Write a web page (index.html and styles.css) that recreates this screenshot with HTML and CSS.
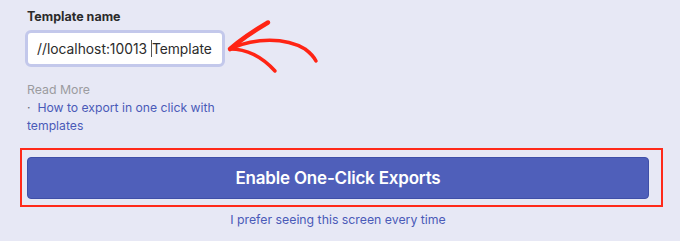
FILE: index.html
```html
<!DOCTYPE html>
<html>
<head>
<meta charset="utf-8">
<link rel="stylesheet" href="styles.css">
</head>
<body>
<div class="panel">
  <div class="label">Template name</div>
  <div class="field-row">
    <div class="field"><span class="value">//localhost:10013 </span><span class="caret"></span><span class="value">Template</span></div>
    <svg class="arrow" width="100" height="65" viewBox="0 0 100 65">
      <g fill="none" stroke="#ff2414" stroke-linecap="round" stroke-linejoin="round">
        <path d="M5 35 Q20 22 43 8.5" stroke-width="4.5"/>
        <path d="M7 34 C30 24 60 23 80 35 Q88 41 91 47" stroke-width="3.5"/>
        <path d="M5 35 Q30 35 50 57" stroke-width="3.5"/>
      </g>
    </svg>
  </div>
  <div class="readmore">Read More</div>
  <div class="links"><a class="link" href="#">How to export in one click with templates</a></div>
  <div class="highlight">
    <button class="primary">Enable One-Click Exports</button>
  </div>
  <div class="secondary"><a class="link" href="#">I prefer seeing this screen every time</a></div>
</div>
</body>
</html>
```
FILE: styles.css
```css
html, body {
  margin: 0;
  padding: 0;
  background: #e7e8f5;
  font-family: Inter, "Noto Sans", sans-serif;
}
.panel {
  padding: 9px 0 0 27px;
  width: 622px;
}
.label {
  font-size: 12.5px;
  font-weight: 700;
  line-height: 16px;
  color: #2b2b2b;
}
.field-row {
  position: relative;
  height: 37px;
  margin-top: 5px;
}
.field {
  box-sizing: border-box;
  margin-left: -2px;
  width: 200px;
  height: 37px;
  border: 3px solid #c3c8eb;
  border-radius: 6px;
  background: #fff;
  padding-left: 9px;
  display: flex;
  align-items: center;
  font-size: 13.8px;
  color: #2b2b2b;
  white-space: pre;
}
.caret {
  display: inline-block;
  width: 1px;
  height: 17px;
  background: #555;
}
.arrow {
  position: absolute;
  left: 198px;
  top: -16px;
}
.readmore {
  margin-top: 14px;
  font-size: 12.3px;
  line-height: 18px;
  color: #9b9b9f;
}
.links {
  width: 200px;
  font-size: 12.2px;
  line-height: 18px;
}
.links::before {
  content: "\00B7\00A0\00A0";
  color: #6a6a7a;
}
.link {
  color: #4a5ab8;
  text-decoration: none;
}
.highlight {
  margin-top: 13px;
  margin-left: -7px;
  width: 622px;
  border: 2px solid #ff2a1a;
  padding: 7px 12px 6px 5px;
}
.primary {
  display: block;
  width: 100%;
  height: 42px;
  border: 1px solid #3f4fa8;
  border-radius: 4px;
  background: #4f5fba;
  color: #fff;
  font-family: Inter, "Noto Sans", sans-serif;
  font-size: 17px;
  font-weight: 600;
  letter-spacing: -0.2px;
}
.secondary {
  margin-top: 4px;
  text-align: center;
  font-size: 12.3px;
  line-height: 18px;
}
```
